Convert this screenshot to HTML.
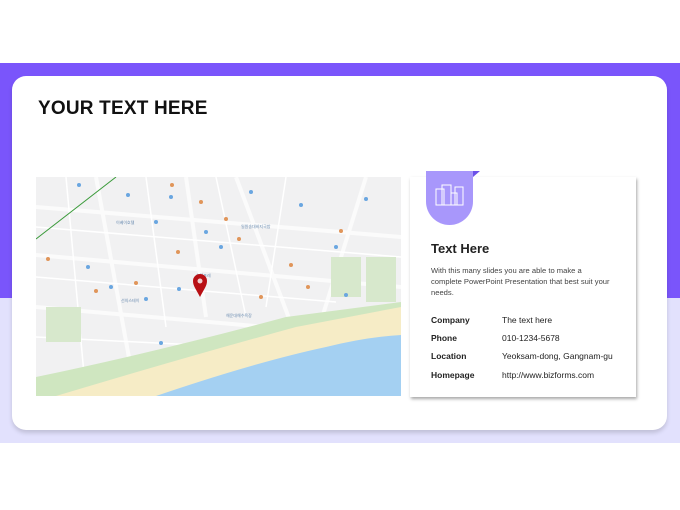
<!DOCTYPE html>
<html><head><meta charset="utf-8"><style>
body{margin:0;width:680px;height:510px;position:relative;background:#fff;font-family:"Liberation Sans","Noto Sans CJK KR",sans-serif;overflow:hidden}
.band{position:absolute;left:0;top:63px;width:680px;height:235px;background:#7a55fb}
.lav{position:absolute;left:0;top:298px;width:680px;height:145px;background:#e2e1fd}
.card{position:absolute;left:12px;top:76px;width:655px;height:354px;background:#fff;border-radius:14px;box-shadow:0 3px 4px rgba(0,0,0,.15)}
h1{position:absolute;left:38px;top:98px;margin:0;font-size:19px;font-weight:bold;color:#111;letter-spacing:.2px}
.map{position:absolute;left:36px;top:177px;width:365px;height:219px}
.info{position:absolute;left:410px;top:177px;width:226px;height:220px;background:#fff;box-shadow:1px 2px 3px rgba(0,0,0,.35)}
.tag{position:absolute;left:426px;top:171px;width:47px;height:54px;background:#a897fb;border-radius:0 0 24px 24px}
.tri{position:absolute;left:473px;top:171px;width:0;height:0;border-left:7px solid #6b50e8;border-bottom:6px solid transparent}
.t{position:absolute;left:431px;top:241px;font-size:13px;font-weight:bold;color:#222}
.d{position:absolute;left:431px;top:265px;width:200px;font-size:7.6px;line-height:11px;color:#444;white-space:nowrap}
.r{position:absolute;left:431px;font-size:8.5px;color:#222}
.r b{display:inline-block;width:71px}
.lb{font-size:4px;fill:#6a8bb0}
</style></head><body>
<div class="band"></div><div class="lav"></div>
<div class="card"></div>
<h1>YOUR TEXT HERE</h1>
<svg class="map" viewBox="0 0 365 219">
<rect width="365" height="219" fill="#f1f1f2"/>
<g stroke="#fbfbfb" stroke-width="4" fill="none">
<path d="M0 78 L365 110"/><path d="M0 130 L230 150"/><path d="M60 0 L100 219"/><path d="M150 0 L170 140"/><path d="M200 0 L260 160"/><path d="M330 0 L280 160"/><path d="M0 30 L365 60"/>
</g>
<g stroke="#fff" stroke-width="1.5" fill="none">
<path d="M0 50 L365 80"/><path d="M0 100 L300 125"/><path d="M30 0 L50 219"/><path d="M110 0 L130 150"/><path d="M250 0 L230 130"/><path d="M0 160 L200 170"/><path d="M180 0 L210 140"/>
</g>
<path d="M0 62 L80 0" stroke="#3a9a3a" stroke-width="1"/>
<path d="M0 219 L0 200 Q120 175 250 140 L365 125 L365 219 Z" fill="#cfe6c0"/>
<path d="M20 219 Q150 180 260 150 L365 130 L365 219 Z" fill="#f6ecc6"/>
<path d="M120 219 Q220 185 290 170 Q330 160 365 158 L365 219 Z" fill="#a4d0f2"/>
<rect x="295" y="80" width="30" height="40" fill="#d7e8cc"/><rect x="330" y="80" width="30" height="45" fill="#d7e8cc"/>
<rect x="10" y="130" width="35" height="35" fill="#d7e8cc"/>
<g fill="#6aa6e0"><circle cx="43" cy="8" r="2"/><circle cx="92" cy="18" r="2"/><circle cx="135" cy="20" r="2"/><circle cx="215" cy="15" r="2"/><circle cx="170" cy="55" r="2"/><circle cx="120" cy="45" r="2"/><circle cx="265" cy="28" r="2"/><circle cx="330" cy="22" r="2"/><circle cx="52" cy="90" r="2"/><circle cx="185" cy="70" r="2"/><circle cx="75" cy="110" r="2"/><circle cx="110" cy="122" r="2"/><circle cx="143" cy="112" r="2"/><circle cx="310" cy="118" r="2"/><circle cx="300" cy="70" r="2"/><circle cx="125" cy="166" r="2"/></g>
<g fill="#e0955a"><circle cx="136" cy="8" r="2"/><circle cx="165" cy="25" r="2"/><circle cx="190" cy="42" r="2"/><circle cx="203" cy="62" r="2"/><circle cx="255" cy="88" r="2"/><circle cx="142" cy="75" r="2"/><circle cx="12" cy="82" r="2"/><circle cx="60" cy="114" r="2"/><circle cx="100" cy="106" r="2"/><circle cx="225" cy="120" r="2"/><circle cx="272" cy="110" r="2"/><circle cx="305" cy="54" r="2"/></g>
<g class="lb"><text x="205" y="51">일원송대바지국밥</text><text x="80" y="47">이베이호텔</text><text x="160" y="100">호텔포레</text><text x="85" y="125">선의스테이</text><text x="190" y="140">해운대해수욕장</text></g>
<path d="M164 120 C160 112 157 109 157 104 A7 7 0 1 1 171 104 C171 109 168 112 164 120 Z" fill="#b80f14"/>
<circle cx="164" cy="104" r="2.5" fill="#fff" opacity=".8"/>
</svg>
<div class="info"></div>
<div class="tri"></div>
<div class="tag"><svg width="47" height="50" viewBox="0 0 47 50"><g fill="none" stroke="#fff" stroke-width="1"><rect x="10" y="18" width="8" height="16"/><rect x="16" y="14" width="9" height="20"/><rect x="25" y="22" width="6" height="12"/><rect x="29" y="16" width="8" height="18"/></g></svg></div>
<div class="t">Text Here</div>
<div class="d">With this many slides you are able to make a<br>complete PowerPoint Presentation that best suit your<br>needs.</div>
<div class="r" style="top:315px"><b>Company</b>The text here</div>
<div class="r" style="top:333px"><b>Phone</b>010-1234-5678</div>
<div class="r" style="top:351px"><b>Location</b>Yeoksam-dong, Gangnam-gu</div>
<div class="r" style="top:370px"><b>Homepage</b>http://www.bizforms.com</div>
</body></html>
